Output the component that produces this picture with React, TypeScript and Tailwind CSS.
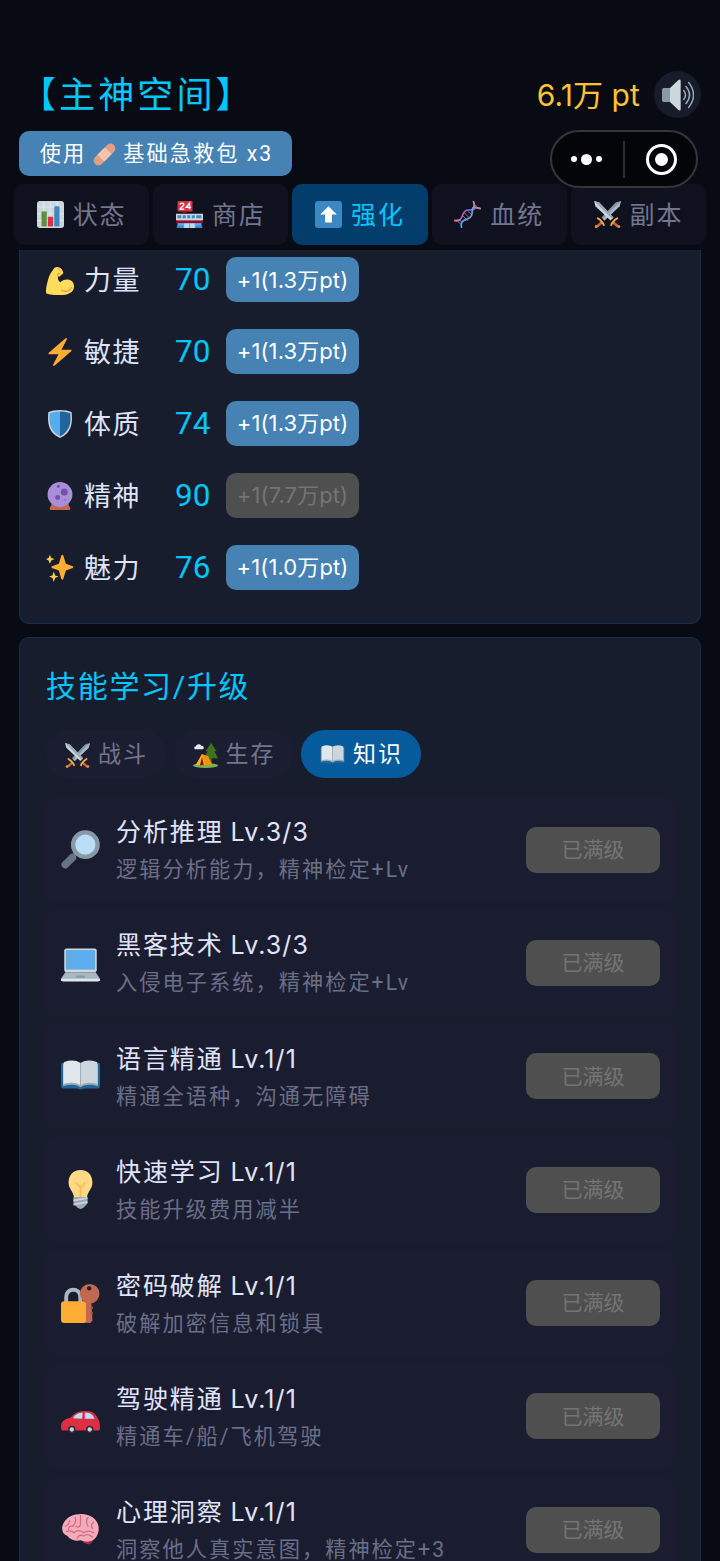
import React from 'react'
import clsx from 'clsx'

type IconProps = { className?: string }

const Svg: React.FC<React.PropsWithChildren<IconProps>> = ({ className, children }) => (
  <svg viewBox="0 0 36 36" fill="none" className={clsx('shrink-0', className)}>
    {children}
  </svg>
)

const ChartIcon = ({ className }: IconProps) => (
  <Svg className={className}>
    <rect width="36" height="36" rx="4" fill="#CCD6DD" />
    <path d="M9 1v34M17.500 1v34M27 1v34M1 8h34M1 17h34M1 26h34" stroke="#E1E8ED" strokeWidth="1.500" />
    <rect x="6" y="14" width="7" height="20" rx="1" fill="#5C913B" />
    <rect x="14.500" y="21" width="7" height="13" rx="1" fill="#DD2E44" />
    <rect x="23" y="7" width="7" height="27" rx="1" fill="#3B88C3" />
  </Svg>
)

const StoreIcon = ({ className }: IconProps) => (
  <Svg className={className}>
    <path d="M2 24h32v12H2z" fill="#55ACEE" />
    <path d="M0 17h36v9H0z" fill="#CCD6DD" />
    <path d="M2 19h5v4H2zM9 19h4v4H9zM15 19h4v4h-4zM21 19h4v4h-4zM27 19h7v4h-7z" fill="#4289C1" />
    <path d="M0 26h36v3.500H0z" fill="#A0041E" />
    <path d="M11 30h14v6H11z" fill="#BBDDF5" />
    <path d="M18 30v6" stroke="#4289C1" />
    <path d="M1 33h9v3H1zM26 33h9v3h-9z" fill="#4289C1" />
    <rect x="2" width="20" height="14" rx="1" fill="#DD2E44" />
    <path d="M5.500 5c0-3 5-3 5 0 0 2-5 3.500-5 6h5.500M18 11V3l-4.500 5.500H20" stroke="#fff" strokeWidth="1.800" />
    <path d="M9 14h5v3H9z" fill="#A0041E" />
  </Svg>
)

const UpIcon = ({ className }: IconProps) => (
  <Svg className={className}>
    <rect width="36" height="36" rx="4" fill="#3B88C3" />
    <path d="M18 7L7 18h6.500v10.500h9V18H29z" fill="#fff" />
  </Svg>
)

const DnaIcon = ({ className }: IconProps) => (
  <Svg className={className}>
    <path d="M4 26l5 5M7 25l3 3M12 20l6 6M14 16l7 7M18 13l6 6M26 7l3 3M26 3l6 6" stroke="#C1694F" strokeWidth="1.300" />
    <path d="M1 26C15 28 8 12 19 12S29 10 26 1" stroke="#9266CC" strokeWidth="2.200" strokeLinecap="round" />
    <path d="M10 35C7 21 23 28 24 17S24 8 35 10" stroke="#55ACEE" strokeWidth="2.200" strokeLinecap="round" />
    <path d="M26 1q1.500 4 .5 7M1 26q4 .6 7-1M31 9.500q2-.2 4 .5" stroke="#DD7799" strokeWidth="2.200" strokeLinecap="round" />
  </Svg>
)

const SwordsIcon = ({ className }: IconProps) => (
  <Svg className={className}>
    <path d="M36 0l-2 7-20 19-4-4L29 2z" fill="#8899A6" />
    <path d="M36 0l-2 7-20 19-2-2z" fill="#AAB8C2" />
    <path d="M0 0l2 7 20 19 4-4L7 2z" fill="#CCD6DD" />
    <path d="M0 0l7 2 19 20-2 2z" fill="#99AAB5" />
    <path d="M11 28l-7 6M25 28l7 6" stroke="#BF6952" strokeWidth="3.500" />
    <path d="M5 23c3 2 7 5 8 9M31 23c-3 2-7 5-8 9" stroke="#FFAC33" strokeWidth="2.600" strokeLinecap="round" />
    <circle cx="3" cy="34" r="2" fill="#F4900C" />
    <circle cx="33" cy="34" r="2" fill="#F4900C" />
  </Svg>
)

const BandageIcon = ({ className }: IconProps) => (
  <Svg className={className}>
    <g transform="rotate(-45 18 18)">
      <rect x="-3" y="10.500" width="42" height="15" rx="7.500" fill="#E39F83" />
      <rect x="10" y="10.500" width="16" height="15" fill="#F7C6B1" />
      <path d="M14 15h.1M18 15h.1M22 15h.1M14 21h.1M18 21h.1M22 21h.1M1 16h.1M4 20h.1M32 16h.1M35 20h.1" stroke="#D99580" strokeWidth="1.300" strokeLinecap="round" />
    </g>
  </Svg>
)

const SpeakerIcon = ({ className }: IconProps) => (
  <Svg className={className}>
    <path d="M2 10h9v16H2q-2 0-2-2V12q0-2 2-2z" fill="#8899A6" />
    <path d="M9 10L18.500 1Q21 0 21 2v32q0 2-2.500 1L9 26z" fill="#CCD6DD" />
    <path d="M24.500 13q4 5 0 10M27 8.500q8 9.500 0 19M30 4q11 14 0 28" stroke="#99AAB5" strokeWidth="1.700" strokeLinecap="round" />
  </Svg>
)

const MuscleIcon = ({ className }: IconProps) => (
  <Svg className={className}>
    <path
      d="M14 0c-2 0-4 1.500-5.500 4.500C5 8 3 14 1.500 21 0 27-.5 31 .5 34c7 2.500 20 3 27 1 6-2 8.500-6 8.500-10 0-6-4-9-9-9-4 0-6 1-8.500 3.500C15.500 18 15 15 15.500 12c2 .5 4-.5 4-2.500 2 .5 3.500-2 2-4C21 3 18 0 14 0z"
      fill="#FFDC5D"
    />
    <path d="M15.500 12c-1-2 0-4 2-4M33 26c-2 5-8 7-13 4" stroke="#EF9645" strokeWidth="1.500" strokeLinecap="round" />
    <path d="M15 2l4 3.500" stroke="#EF9645" strokeWidth="1" strokeLinecap="round" />
  </Svg>
)

const BoltIcon = ({ className }: IconProps) => (
  <Svg className={className}>
    <path
      d="M32.938 15.651C32.792 15.260 32.418 15 32 15H19.925L26.890 1.458c.219-.426.106-.947-.271-1.243C26.437.071 26.218 0 26 0c-.233 0-.466.082-.653.243L18 6.588 3.347 19.243c-.316.273-.430.714-.284 1.105S3.582 21 4 21h12.075L9.110 34.542c-.219.426-.106.947.271 1.243.182.144.401.215.619.215.233 0 .466-.082.653-.243L18 29.412l14.653-12.655c.317-.273.430-.714.285-1.106z"
      fill="#FFAC33"
    />
  </Svg>
)

const ShieldIcon = ({ className }: IconProps) => (
  <Svg className={className}>
    <path d="M18 0c6 0 11 1 15 3 1 12 1 26-15 33C2 29 2 15 3 3c4-2 9-3 15-3z" fill="#CCD6DD" />
    <path d="M18 1.800c-5 0-9 .7-13.300 2.500C4 15 4 27 18 34z" fill="#55ACEE" />
    <path d="M18 1.800c5 0 9 .7 13.300 2.500C32 15 32 27 18 34z" fill="#226699" />
  </Svg>
)

const CrystalIcon = ({ className }: IconProps) => (
  <Svg className={className}>
    <path d="M8 27h20l3 6c1 2 0 3-2 3H7c-2 0-3-1-2-3z" fill="#C1694F" />
    <circle cx="18" cy="16" r="16" fill="#AA8DD8" />
    <circle cx="23.500" cy="13" r="4.500" fill="#7450A8" />
    <circle cx="15" cy="20" r="3.200" fill="#7450A8" />
    <circle cx="16" cy="5.500" r="2" fill="#7450A8" />
    <circle cx="24" cy="23" r="1.200" fill="#9266CC" />
  </Svg>
)

const SparkleIcon = ({ className }: IconProps) => (
  <Svg className={className}>
    <path d="M21 1q1 0 1.300 1l3.200 10.600 9 3.300q1.200 1 0 2l-9 3.300L22.300 32q-1.300 2-2.600 0l-3.200-10.800-9-3.300q-1.200-1 0-2l9-3.300L19.700 2q.3-1 1.300-1z" fill="#FFAC33" />
    <path d="M5 1l1.700 4L11 6.500 6.700 8.200 5 12.500 3.300 8.200 0 6.500 3.300 5zM10 22.500l1.700 5L16 29l-4.300 1.700L10 36l-1.700-5.300L4 29l4.300-1.500z" fill="#FFCC4D" />
  </Svg>
)

const CampIcon = ({ className }: IconProps) => (
  <Svg className={className}>
    <path d="M26 0l8 12h-3l5 10h-9v9h-3v-9h-8l5-10h-3z" fill="#3E721D" />
    <ellipse cx="18" cy="32.500" rx="18" ry="3.500" fill="#77B255" />
    <path d="M13 16l9 3 6 13H4z" fill="#F4900C" />
    <path d="M13 16l5 16H4z" fill="#FFAC33" />
    <path d="M13 20l2.500 12H10z" fill="#662113" />
    <path d="M4 9c-3 0-3-4 0-4 1-4 7-4 8-1 4-1 5 5 1 5z" fill="#E1E8ED" />
  </Svg>
)

const BookIcon = ({ className }: IconProps) => (
  <Svg className={className}>
    <path d="M2 5q-2 0-2 3v19q0 2 2 2h13q3 2 6 0h13q2 0 2-2V8q0-3-2-3z" fill="#226699" />
    <path d="M3 4.500q9-3 15 1V27q-7-4-16-1V7z" fill="#E1E8ED" />
    <path d="M33 4.500q-9-3-15 1V27q7-4 16-1V7z" fill="#CCD6DD" />
    <path d="M2 25q10-3 16 1 6-4 16-1v2q-10-3-16 1-6-4-16-1z" fill="#99AAB5" />
    <path d="M18 5.500V27" stroke="#99AAB5" strokeWidth=".8" />
  </Svg>
)

const MagnifierIcon = ({ className }: IconProps) => (
  <Svg className={className}>
    <path d="M14 21l-4 4" stroke="#66757F" strokeWidth="3" />
    <path d="M10.500 25.500L4 32" stroke="#66757F" strokeWidth="7" strokeLinecap="round" />
    <circle cx="22.500" cy="13.500" r="11.300" fill="#BBDDF5" stroke="#8899A6" strokeWidth="4" />
  </Svg>
)

const LaptopIcon = ({ className }: IconProps) => (
  <Svg className={className}>
    <rect x="3" y="5" width="30" height="22" rx="2" fill="#CCD6DD" />
    <rect x="4.500" y="6.500" width="27" height="18" fill="#5DADEC" />
    <path d="M4 27h28l4 6v2H0v-2z" fill="#AAB8C2" />
    <path d="M0 33h36v1q0 1.500-2 1.500H2q-2 0-2-1.500z" fill="#E1E8ED" />
    <path d="M14.500 30h7l.8 2h-8.600z" fill="#8899A6" />
  </Svg>
)

const BulbIcon = ({ className }: IconProps) => (
  <Svg className={className}>
    <path d="M18 0C11 0 7 5 7 11.500 7 18 12 20 12 26h12c0-6 5-8 5-14.500C29 5 25 0 18 0z" fill="#FFD983" />
    <path d="M14 12l4 4 4-4M18 16v10" stroke="#FFB84D" strokeWidth="1.400" strokeLinecap="round" />
    <path d="M11.500 25h13v6l-2 2q-4.500 6-9 0l-2-2z" fill="#99AAB5" />
    <path d="M11.500 28l13-2M11.500 32l13-2.500" stroke="#CCD6DD" strokeWidth="1.500" />
  </Svg>
)

const LockIcon = ({ className }: IconProps) => (
  <Svg className={className}>
    <path d="M4.800 18v-6c0-9 13-9 13 0v6" stroke="#AAB8C2" strokeWidth="3.600" />
    <rect y="16" width="24" height="20" rx="3" fill="#FFAC33" />
    <path d="M23 15h5l1 19-2 2h-4z" fill="#C1694F" />
    <circle cx="26.500" cy="9" r="9" fill="#C1694F" />
    <circle cx="26" cy="4" r="2" fill="#181D2F" />
    <path d="M28.500 21v2M28.500 26v2" stroke="#A0503A" strokeWidth="2" />
  </Svg>
)

const CarIcon = ({ className }: IconProps) => (
  <Svg className={className}>
    <path d="M1 31q-2-3 0-8 3-3 8-4c4-5 8-6 14-6 7 0 9 3 11 7 2 2 2 6 2 9 0 2-1 2-3 2z" fill="#DD2E44" />
    <path d="M11 19.500c2-3.500 5-5 9-5l-.5 5.500zM22 14.500c5 0 7 1 9 5.500h-9z" fill="#BBDDF5" />
    <circle cx="10" cy="30" r="3.500" fill="#292F33" />
    <circle cx="26.500" cy="30" r="3.500" fill="#292F33" />
    <circle cx="10" cy="30" r="2" fill="#CCD6DD" />
    <circle cx="26.500" cy="30" r="2" fill="#CCD6DD" />
  </Svg>
)

const BrainIcon = ({ className }: IconProps) => (
  <Svg className={className}>
    <path d="M19 27q2 5 7 4.500 3-1 5-6z" fill="#DD2E44" fillOpacity=".75" />
    <path d="M16 4C10 4 4 8 2 13c-2 4-1 9 4 11 3 4 8 5 12 4 5 2 12 2 15-4 4-7 1-15-5-18-4-2-8-3-12-2z" fill="#F4ABBA" />
    <path d="M8 10q-1 4-4 5M13 7q2 3-2 8M11 15q-4-1-4 3M18 5v9q-2 3-4 1M25 7q-3 3 0 8M30 11q-3 3-1 6M5 20q4-2 7 1 4-4 9 0 5-3 9 0M15 26q2-4 6-2 4-3 8 1" stroke="#D26D83" strokeWidth="1.200" strokeLinecap="round" />
  </Svg>
)

const tabs = [
  { label: '状态', Icon: ChartIcon },
  { label: '商店', Icon: StoreIcon },
  { label: '强化', Icon: UpIcon, active: true },
  { label: '血统', Icon: DnaIcon },
  { label: '副本', Icon: SwordsIcon },
]

const stats = [
  { name: '力量', value: 70, cost: '1.3万', Icon: MuscleIcon },
  { name: '敏捷', value: 70, cost: '1.3万', Icon: BoltIcon },
  { name: '体质', value: 74, cost: '1.3万', Icon: ShieldIcon },
  { name: '精神', value: 90, cost: '7.7万', Icon: CrystalIcon, disabled: true },
  { name: '魅力', value: 76, cost: '1.0万', Icon: SparkleIcon },
]

const categories = [
  { label: '战斗', Icon: SwordsIcon },
  { label: '生存', Icon: CampIcon },
  { label: '知识', Icon: BookIcon, active: true },
]

const skills = [
  { name: '分析推理', level: 'Lv.3/3', desc: '逻辑分析能力，精神检定+Lv', Icon: MagnifierIcon },
  { name: '黑客技术', level: 'Lv.3/3', desc: '入侵电子系统，精神检定+Lv', Icon: LaptopIcon },
  { name: '语言精通', level: 'Lv.1/1', desc: '精通全语种，沟通无障碍', Icon: BookIcon },
  { name: '快速学习', level: 'Lv.1/1', desc: '技能升级费用减半', Icon: BulbIcon },
  { name: '密码破解', level: 'Lv.1/1', desc: '破解加密信息和锁具', Icon: LockIcon },
  { name: '驾驶精通', level: 'Lv.1/1', desc: '精通车/船/飞机驾驶', Icon: CarIcon },
  { name: '心理洞察', level: 'Lv.1/1', desc: '洞察他人真实意图，精神检定+3', Icon: BrainIcon },
]

const Capsule = () => (
  <div className="absolute left-[550px] top-[130px] flex h-[58px] w-[148px] items-center rounded-full border-2 border-[#343538] bg-[#040509]">
    <div className="flex flex-1 items-center justify-center gap-1 pr-0.5 text-white">
      <span className="size-1.5 rounded-full bg-white" />
      <span className="size-[11px] rounded-full bg-white" />
      <span className="size-1.5 rounded-full bg-white" />
    </div>
    <div className="h-[37px] w-0.5 bg-[#2c2d31]" />
    <div className="flex flex-1 items-center justify-center pl-0.5">
      <div className="flex size-[31px] items-center justify-center rounded-full border-3 border-white">
        <span className="size-[13px] rounded-full bg-white" />
      </div>
    </div>
  </div>
)

const Header = () => (
  <header className="flex h-[131px] items-end justify-between pl-[20px] pr-[19px] pb-[13px]">
    <h1 className="pt-[3px] text-[36px] leading-[44px] tracking-[3.100px] text-[#00c8ff]">【主神空间】</h1>
    <div className="flex items-center gap-[14px]">
      <span className="pt-0.5 font-['Inter','Noto_Sans_CJK_SC',sans-serif] text-[30px] leading-[45px] tracking-[0.100px] text-[#ffc233]">
        6.1万 pt
      </span>
      <div className="flex size-[47px] items-center justify-center rounded-full bg-[#181b2a]">
        <SpeakerIcon className="size-[32px]" />
      </div>
    </div>
  </header>
)

const StatsCard = () => (
  <section className="h-[374px] rounded-b-[10px] border border-t-0 border-[#15304a] bg-[#181d2e] pl-[26px] pt-[7px]">
    <div className="flex flex-col gap-[26.900px]">
      {stats.map(({ name, value, cost, Icon, disabled }) => (
        <div key={name} className="flex h-[45px] items-center">
          <Icon className="mt-0.5 size-[28px]" />
          <span className="ml-[10px] w-[91px] pt-1 text-[27px] tracking-[1.600px] text-[#dfe3fa]">{name}</span>
          <span className="w-[51px] pt-px text-[31.500px] text-[#00c8ff]">{value}</span>
          <button
            className={clsx(
              "h-[45px] w-[133px] whitespace-nowrap rounded-[10px] pt-px font-['Inter','Noto_Sans_CJK_SC',sans-serif] text-[22px] tracking-[0.100px]",
              disabled ? 'bg-[#4f4f4f] text-[#747474]' : 'bg-[#4682b4] text-white'
            )}
          >
            +1({cost}pt)
          </button>
        </div>
      ))}
    </div>
  </section>
)

const SkillsCard = () => (
  <section className="mt-[13px] h-[1100px] rounded-[10px] border border-[#15304a] bg-[#181d2e] px-[26px] pt-[27px]">
    <h2 className="text-[30px] leading-[44px] tracking-[1.700px] text-[#00c8ff]">技能学习/升级</h2>
    <div className="mt-[21px] flex gap-2">
      {categories.map(({ label, Icon, active }) => (
        <div
          key={label}
          className={clsx(
            'flex h-12 w-[119.500px] items-center gap-[8px] rounded-full pl-[19px] text-[23px] tracking-[1.900px]',
            active ? 'bg-[#065b9c] text-white' : 'bg-[#1b1e30] text-[#73758f]'
          )}
        >
          <Icon className="mt-0.5 size-[25px]" />
          <span className="pt-[3px]">{label}</span>
        </div>
      ))}
    </div>
    <div className="mt-[18.700px] flex flex-col gap-[7.700px]">
      {skills.map(({ name, level, desc, Icon }) => (
        <div key={name} className="flex h-[105.700px] items-center rounded-[10px] bg-[#1a1d30] pl-[15px] pr-[14px]">
          <Icon className="size-[39px]" />
          <div className="ml-[16px] flex-1 whitespace-nowrap pt-0.5">
            <div className="text-[25px] leading-[38px] tracking-[1.900px] text-[#e0e4fb]">
              {name}
              <span className="ml-[7px] font-['Inter',sans-serif] tracking-[1.100px]">{level}</span>
            </div>
            <div className="text-[21.200px] leading-[36px] tracking-[2.050px] text-[#6b6e87]">{desc}</div>
          </div>
          <button className="h-[46px] w-[134px] rounded-[10px] bg-[#4f4f4f] pt-0.5 text-[21px] text-[#747474]">已满级</button>
        </div>
      ))}
    </div>
  </section>
)

const App: React.FC = () => {
  return (
    <div className="relative h-[1561px] w-[720px] overflow-hidden bg-[#080b13] font-['Roboto','Noto_Sans_CJK_SC',sans-serif]">
      <Header />
      <div className="pl-[19px]">
        <button className="flex h-[45px] w-[273px] items-center justify-center gap-[7px] rounded-[10px] bg-[#4682b4] pl-0.5 pt-px text-[21.200px] tracking-[2.050px] text-white">
          <span>使用</span>
          <BandageIcon className="size-[23px]" />
          <span>基础急救包 x3</span>
        </button>
      </div>
      <nav className="mt-2 flex gap-1 px-[14px]">
        {tabs.map(({ label, Icon, active }) => (
          <div
            key={label}
            className={clsx(
              'flex h-[61px] flex-1 items-center justify-center gap-[9px] rounded-[10px] text-[25px] tracking-[1.900px]',
              active ? 'bg-[#033d6b] text-[#00c8ff]' : 'bg-[#0f121e] text-[#73758f]'
            )}
          >
            <Icon className="size-[27px]" />
            <span className="pt-0.5">{label}</span>
          </div>
        ))}
      </nav>
      <main className="mt-[5px] px-[19px]">
        <StatsCard />
        <SkillsCard />
      </main>
      <Capsule />
    </div>
  )
}

export default App
